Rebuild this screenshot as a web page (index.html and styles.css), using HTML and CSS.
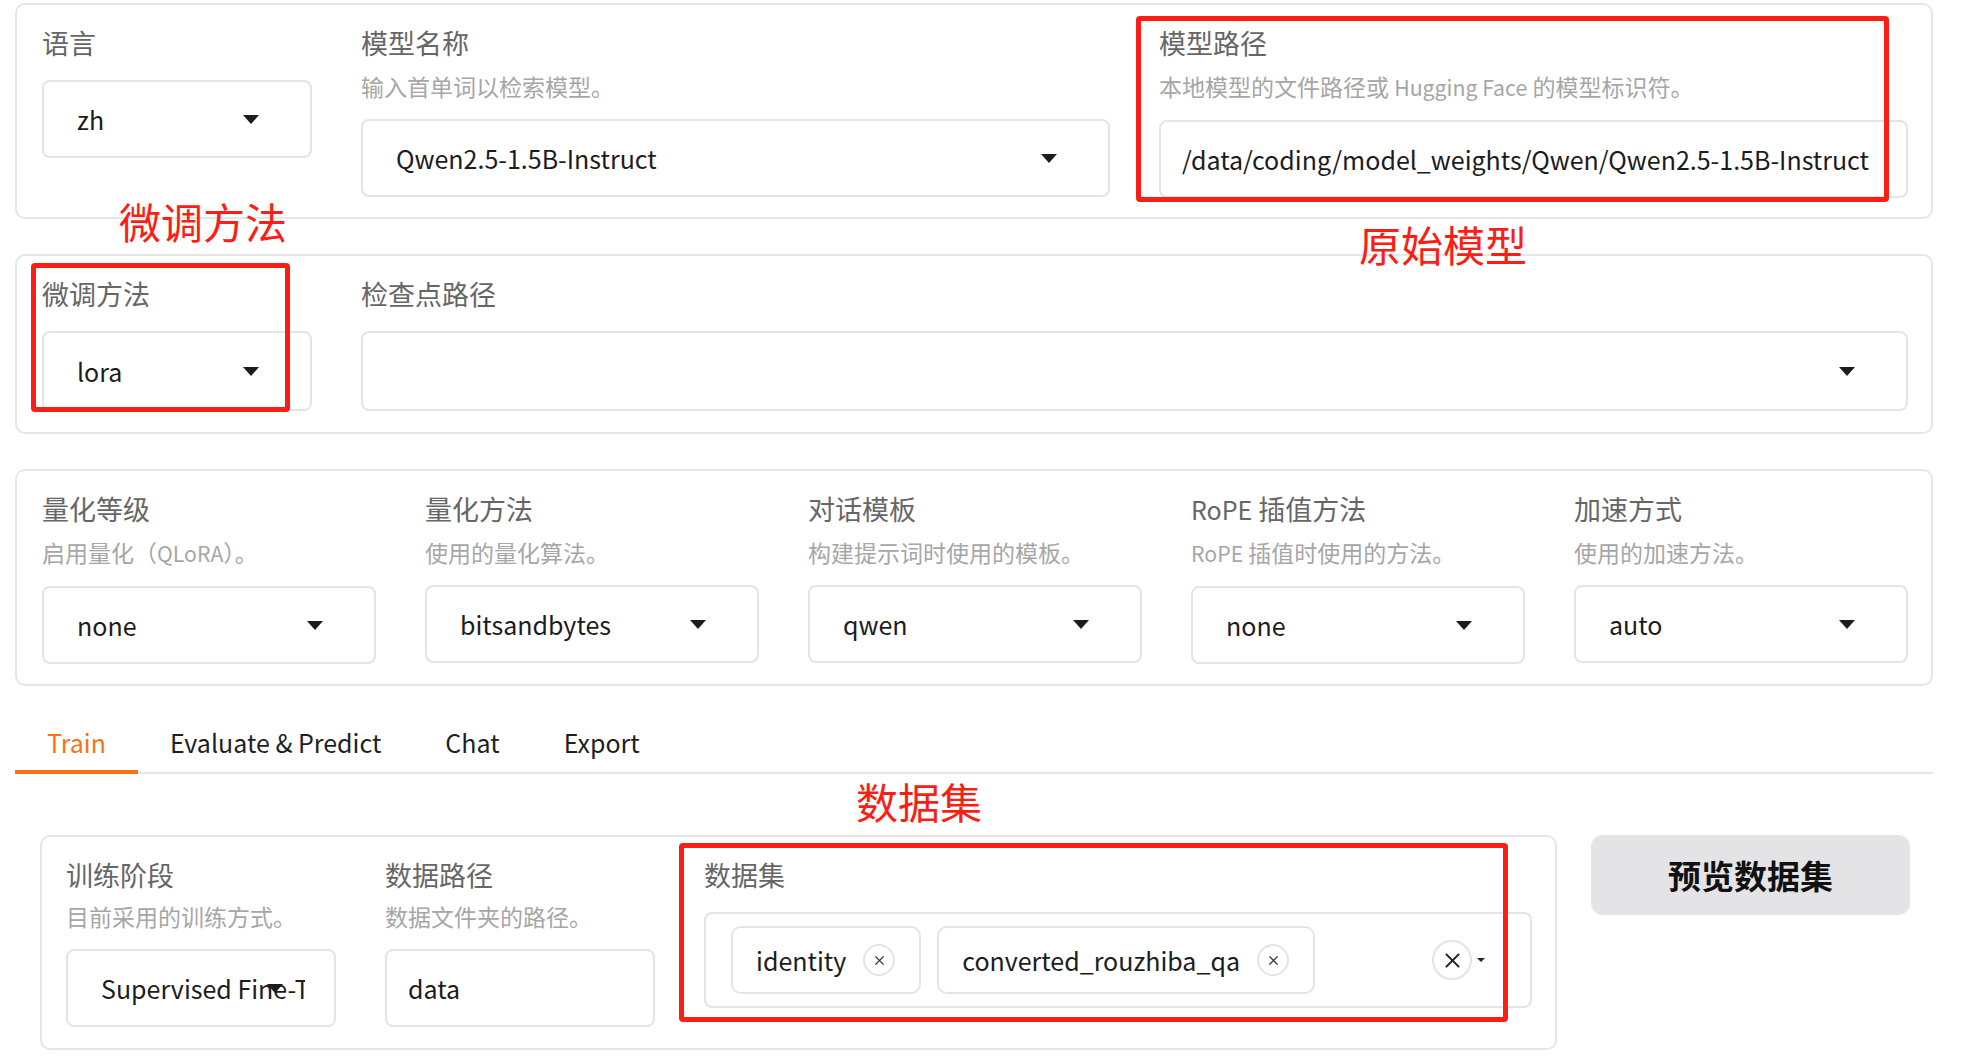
FILE: index.html
```html
<!DOCTYPE html>
<html lang="zh">
<head>
<meta charset="utf-8">
<title>LLaMA Board</title>
<link rel="stylesheet" href="styles.css">
</head>
<body>
<div class="page">
  <section class="card card-top">
    <div class="row">
      <div class="field col-fixed">
        <div class="label">语言</div>
        <div class="dd"><span class="dd-text">zh</span><span class="caret"></span></div>
      </div>
      <div class="field col">
        <div class="label">模型名称</div>
        <div class="info">输入首单词以检索模型。</div>
        <div class="dd"><span class="dd-text">Qwen2.5-1.5B-Instruct</span><span class="caret"></span></div>
      </div>
      <div class="field col">
        <div class="label">模型路径</div>
        <div class="info">本地模型的文件路径或 <span class="lat">Hugging Face</span> 的模型标识符。</div>
        <div class="tb">/data/coding/model_weights/Qwen/Qwen2.5-1.5B-Instruct</div>
      </div>
    </div>
  </section>

  <section class="card card-mid">
    <div class="row">
      <div class="field col-fixed">
        <div class="label">微调方法</div>
        <div class="dd dd-tall"><span class="dd-text">lora</span><span class="caret"></span></div>
      </div>
      <div class="field col">
        <div class="label">检查点路径</div>
        <div class="dd dd-tall"><span class="dd-text"></span><span class="caret"></span></div>
      </div>
    </div>
  </section>

  <section class="card card-quant">
    <div class="row">
      <div class="field col">
        <div class="label">量化等级</div>
        <div class="info">启用量化（<span class="lat">QLoRA</span>）。</div>
        <div class="dd"><span class="dd-text">none</span><span class="caret"></span></div>
      </div>
      <div class="field col">
        <div class="label">量化方法</div>
        <div class="info">使用的量化算法。</div>
        <div class="dd"><span class="dd-text">bitsandbytes</span><span class="caret"></span></div>
      </div>
      <div class="field col">
        <div class="label">对话模板</div>
        <div class="info">构建提示词时使用的模板。</div>
        <div class="dd"><span class="dd-text">qwen</span><span class="caret"></span></div>
      </div>
      <div class="field col">
        <div class="label"><span class="lat">RoPE</span> 插值方法</div>
        <div class="info"><span class="lat">RoPE</span> 插值时使用的方法。</div>
        <div class="dd"><span class="dd-text">none</span><span class="caret"></span></div>
      </div>
      <div class="field col">
        <div class="label">加速方式</div>
        <div class="info">使用的加速方法。</div>
        <div class="dd"><span class="dd-text">auto</span><span class="caret"></span></div>
      </div>
    </div>
  </section>

  <nav class="tabs">
    <button class="tab active">Train</button>
    <button class="tab">Evaluate &amp; Predict</button>
    <button class="tab">Chat</button>
    <button class="tab">Export</button>
  </nav>

  <div class="panel">
    <div class="panel-row">
      <section class="card card-train">
        <div class="row">
          <div class="field col-fixed">
            <div class="label">训练阶段</div>
            <div class="info">目前采用的训练方式。</div>
            <div class="dd"><span class="dd-text">Supervised Fine-Tuning</span><span class="caret"></span></div>
          </div>
          <div class="field col-fixed">
            <div class="label">数据路径</div>
            <div class="info">数据文件夹的路径。</div>
            <div class="tb">data</div>
          </div>
          <div class="field col">
            <div class="label">数据集</div>
            <div class="ms">
              <span class="chip">identity<span class="chip-x"><svg viewBox="0 0 12 12" width="11" height="11"><path d="M1.5 1.5L10.5 10.5M10.5 1.5L1.5 10.5" stroke="#333" stroke-width="1.5" fill="none"/></svg></span></span>
              <span class="chip">converted_rouzhiba_qa<span class="chip-x"><svg viewBox="0 0 12 12" width="11" height="11"><path d="M1.5 1.5L10.5 10.5M10.5 1.5L1.5 10.5" stroke="#333" stroke-width="1.5" fill="none"/></svg></span></span>
              <span class="ms-tools">
                <span class="clear-x"><svg viewBox="0 0 18 18" width="17" height="17"><path d="M2 2L16 16M16 2L2 16" stroke="#222" stroke-width="2.2" fill="none"/></svg></span>
                <span class="mini-caret"></span>
              </span>
            </div>
          </div>
        </div>
      </section>
      <button class="preview-btn">预览数据集</button>
    </div>
  </div>

  <div class="note-box box-path"></div>
  <div class="note-box box-method"></div>
  <div class="note-box box-dataset"></div>
  <div class="note-text text-method">微调方法</div>
  <div class="note-text text-model">原始模型</div>
  <div class="note-text text-dataset">数据集</div>
</div>
</body>
</html>
```

FILE: styles.css
```css
* { box-sizing: border-box; }

html, body {
  margin: 0;
  padding: 0;
  background: #ffffff;
}

body {
  font-family: "Noto Sans CJK SC", "Noto Sans", sans-serif;
  color: #1f1f1f;
}

.page {
  position: relative;
  padding: 3px 38px 0 15px;
}

.card {
  border: 2px solid #e6e6e6;
  border-radius: 10px;
  background: #fff;
}

.card-top {
  padding: 18px 23px 19px 25px;
  margin-bottom: 35px;
}

.card-mid {
  padding: 18px 23px 21px 25px;
  margin-bottom: 35px;
}

.card-quant {
  padding: 18px 23px 20px 25px;
}

.row {
  display: flex;
  gap: 49px;
}

.col-fixed {
  width: 270px;
  flex: none;
}

.col {
  flex: 1;
  min-width: 0;
}

.lat {
  font-size: 0.926em;
}

.label {
  font-size: 27px;
  line-height: 36px;
  padding-top: 2px;
  color: #666666;
  margin-bottom: 19px;
  white-space: nowrap;
}

.info {
  font-size: 23px;
  line-height: 30px;
  color: #a6a6a6;
  margin-top: -9px;
  margin-bottom: 18px;
  white-space: nowrap;
}

.dd, .tb {
  position: relative;
  height: 78px;
  border: 2px solid #e4e4e4;
  border-radius: 8px;
  display: flex;
  align-items: center;
  font-size: 25px;
  line-height: 36px;
  color: #1c1c1c;
  white-space: nowrap;
  background: #fff;
}

.dd {
  padding-left: 33px;
}

.dd-tall {
  height: 80px;
}

.tb {
  padding-left: 21px;
  overflow: hidden;
}

.dd-text {
  display: block;
  overflow: hidden;
  max-width: calc(100% - 29px);
}

.caret {
  position: absolute;
  right: 51px;
  top: 50%;
  margin-top: -4px;
  width: 0;
  height: 0;
  border-left: 8px solid transparent;
  border-right: 8px solid transparent;
  border-top: 9px solid #1c1c1c;
}

/* tabs */
.tabs {
  display: flex;
  margin-top: 38px;
  border-bottom: 2px solid #e6e6e6;
}

.tab {
  font-family: inherit;
  font-size: 25px;
  line-height: 36px;
  background: none;
  border: none;
  border-bottom: 4px solid transparent;
  margin-bottom: -2px;
  padding: 0 32px 10px;
  color: #1f1f1f;
  cursor: pointer;
}

.tab.active {
  color: #f97316;
  border-bottom-color: #f97316;
}

/* train panel */
.panel {
  padding: 61px 23px 0 25px;
}

.panel-row {
  display: flex;
  gap: 34px;
  align-items: flex-start;
}

.card-train {
  flex: 1;
  min-width: 0;
  padding: 18px 23px 21px 24px;
}

.card-train .info {
  margin-top: -11px;
  margin-bottom: 18px;
}

.ms {
  height: 96px;
  border: 2px solid #e4e4e4;
  border-radius: 8px;
  display: flex;
  align-items: center;
  gap: 16px;
  padding: 0 45px 0 25px;
  font-size: 25px;
  line-height: 36px;
  color: #1c1c1c;
}

.chip {
  height: 68px;
  border: 2px solid #e4e4e4;
  border-radius: 10px;
  display: flex;
  align-items: center;
  gap: 17px;
  padding: 0 24px 0 23px;
  white-space: nowrap;
}

.chip-x {
  width: 32px;
  height: 32px;
  border: 2px solid #e4e4e4;
  border-radius: 50%;
  display: flex;
  align-items: center;
  justify-content: center;
}

.ms-tools {
  margin-left: auto;
  display: flex;
  align-items: center;
  gap: 5px;
}

.clear-x {
  width: 40px;
  height: 40px;
  border: 2px solid #e4e4e4;
  border-radius: 50%;
  display: flex;
  align-items: center;
  justify-content: center;
}

.mini-caret {
  width: 0;
  height: 0;
  border-left: 4px solid transparent;
  border-right: 4px solid transparent;
  border-top: 4px solid #222;
}

.preview-btn {
  width: 319px;
  height: 80px;
  flex: none;
  border: none;
  border-radius: 12px;
  background: #e4e4e7;
  font-family: inherit;
  font-size: 33px;
  font-weight: 700;
  color: #111;
  cursor: pointer;
}

/* annotations */
.note-box {
  position: absolute;
  border: 5px solid #fa1e14;
  border-radius: 4px;
  pointer-events: none;
}

.box-path { left: 1136px; top: 16px; width: 753px; height: 186px; }
.box-method { left: 31px; top: 263px; width: 259px; height: 149px; }
.box-dataset { left: 679px; top: 843px; width: 829px; height: 179px; }

.note-text {
  position: absolute;
  font-size: 42px;
  line-height: 42px;
  color: #fa1e14;
  white-space: nowrap;
}

.text-method { left: 119px; top: 200px; }
.text-model { left: 1359px; top: 223px; }
.text-dataset { left: 856px; top: 780px; }
```
